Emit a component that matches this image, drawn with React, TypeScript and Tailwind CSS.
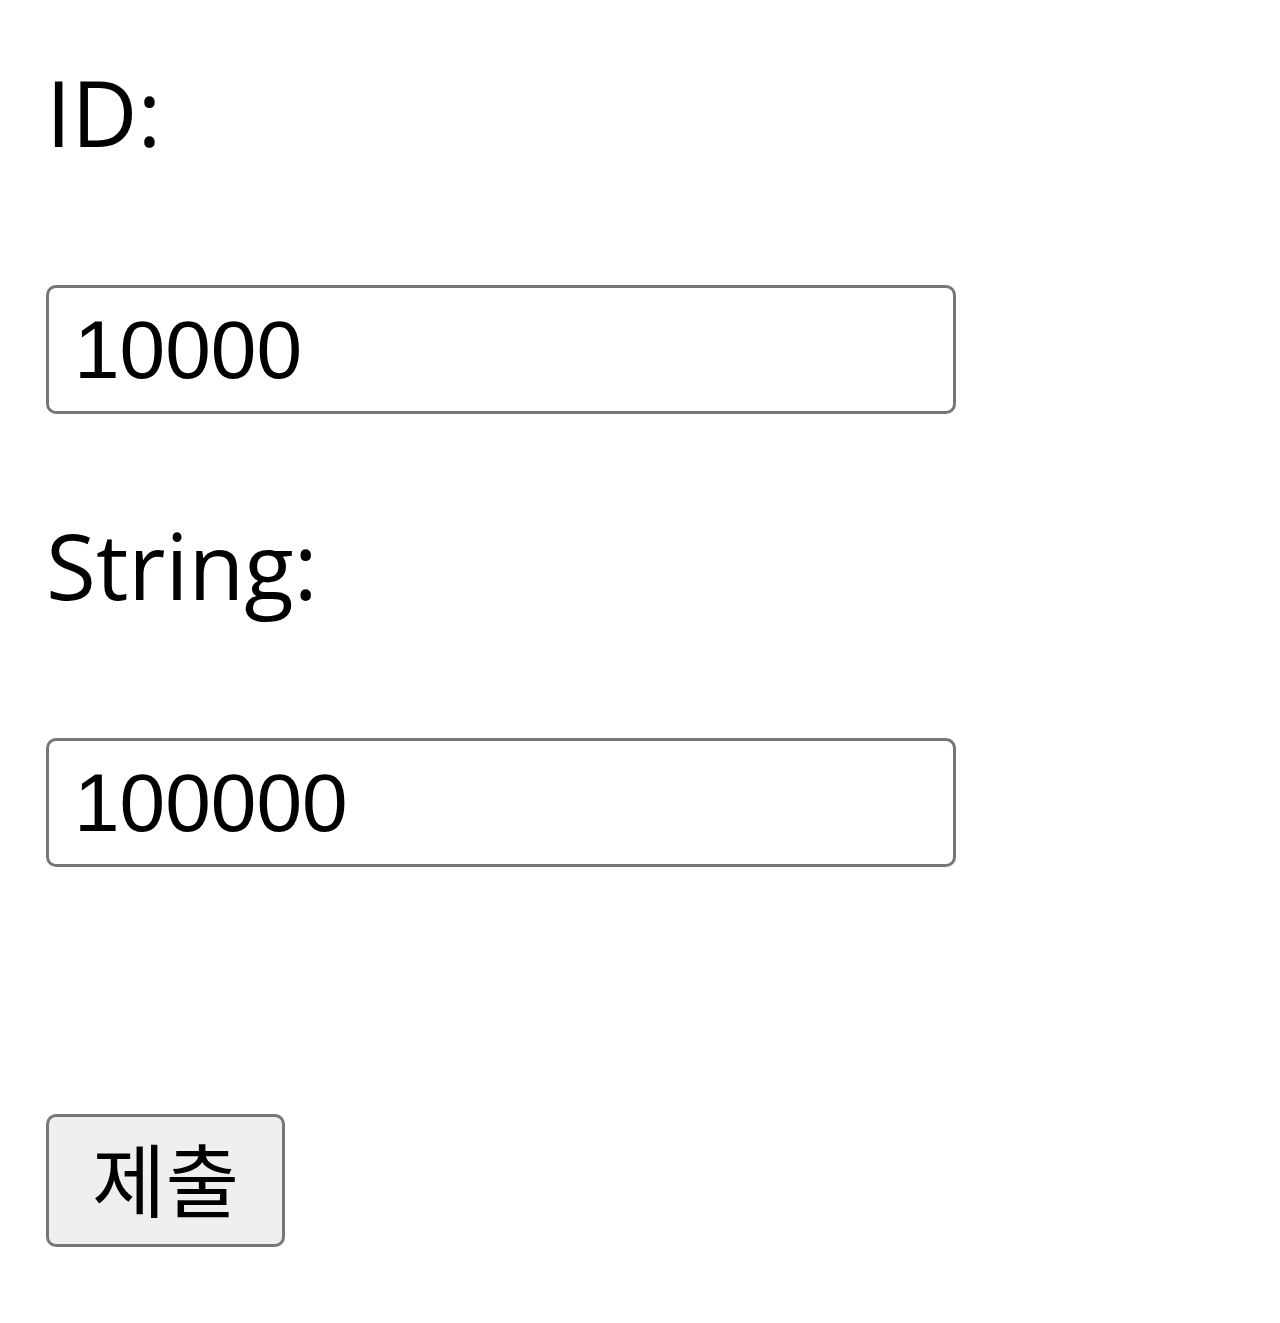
import React from 'react';

const App: React.FC = () => {
  return (
    <div className="min-h-[1323px] bg-white pl-[46px] pt-[67px]">
      <form onSubmit={(e) => e.preventDefault()}>
        {/* ID */}
        <label className="block h-[91px] text-[91px] leading-[91px] text-black font-[Open_Sans,sans-serif]">
          ID:
        </label>
        <input
          type="text"
          defaultValue="10000"
          className="mt-[127px] block h-[129px] w-[910px] rounded-[10px] border-[3px] border-[#767676] bg-white pl-[25px] text-[82px] text-black font-[Liberation_Sans,Arial,sans-serif] outline-none"
        />

        {/* String */}
        <label className="mt-[106px] block h-[91px] text-[91px] leading-[91px] text-black font-[Open_Sans,sans-serif]">
          String:
        </label>
        <input
          type="text"
          defaultValue="100000"
          className="mt-[127px] block h-[129px] w-[910px] rounded-[10px] border-[3px] border-[#767676] bg-white pl-[25px] text-[82px] text-black font-[Liberation_Sans,Arial,sans-serif] outline-none"
        />

        <button
          type="submit"
          className="mt-[247px] flex h-[133px] w-[239px] items-center justify-center rounded-[10px] border-[3px] border-[#767676] bg-[#efefef] pb-[10px] text-[80px] leading-none text-black font-[Noto_Sans_CJK_KR,sans-serif]"
        >
          제출
        </button>
      </form>
    </div>
  );
};

export default App;
